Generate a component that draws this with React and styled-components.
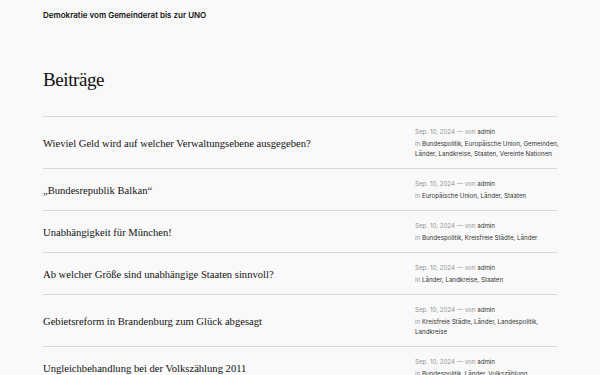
import React from "react";
import styled, { createGlobalStyle } from "styled-components";

const Global = createGlobalStyle`
  html, body { margin: 0; padding: 0; background: #f9f9f9; }
  body { font-family: Inter, "Noto Sans", sans-serif; color: #111; }
`;

const Page = styled.div`
  padding: 0 43px;
  display: flex;
  flex-direction: column;
`;

const Header = styled.header`
  height: 29px;
  display: flex;
  align-items: center;
`;

const SiteTitle = styled.a`
  font-family: Inter, sans-serif;
  font-weight: 600;
  font-size: 8px;
  color: #111;
  text-decoration: none;
`;

const PageTitle = styled.h1`
  margin: 39px 0 24px;
  font-family: "Liberation Serif", serif;
  font-weight: 400;
  font-size: 19px;
  letter-spacing: -0.4px;
  line-height: 24px;
  color: #111;
`;

const List = styled.ul`
  list-style: none;
  margin: 0;
  padding: 0;
`;

const Row = styled.li`
  border-top: 1px solid #d8d8d8;
  display: flex;
  align-items: center;
  padding: 10px 0 9px;
`;

const PostTitle = styled.h2`
  flex: 1;
  margin: 0;
  font-family: "Liberation Serif", serif;
  font-weight: 400;
  font-size: 10.6px;
  color: #111;
`;

const Meta = styled.div`
  width: 145px;
  margin-right: -3px;
  flex: none;
  display: flex;
  flex-direction: column;
  gap: 2px;
  font-size: 6.2px;
  line-height: 10px;
`;

const MetaLine = styled.div`
  color: #949494;
`;

const Strong = styled.span`
  color: #333;
`;

const posts = [
  { t: "Wieviel Geld wird auf welcher Verwaltungsebene ausgegeben?", c: "Bundespolitik, Europäische Union, Gemeinden, Länder, Landkreise, Staaten, Vereinte Nationen" },
  { t: "„Bundesrepublik Balkan“", c: "Europäische Union, Länder, Staaten" },
  { t: "Unabhängigkeit für München!", c: "Bundespolitik, Kreisfreie Städte, Länder" },
  { t: "Ab welcher Größe sind unabhängige Staaten sinnvoll?", c: "Länder, Landkreise, Staaten" },
  { t: "Gebietsreform in Brandenburg zum Glück abgesagt", c: "Kreisfreie Städte, Länder, Landespolitik, Landkreise" },
  { t: "Ungleichbehandlung bei der Volkszählung 2011", c: "Bundespolitik, Länder, Volkszählung" },
];

export default function App() {
  return (
    <>
      <Global />
      <Page>
        <Header>
          <SiteTitle href="#">Demokratie vom Gemeinderat bis zur UNO</SiteTitle>
        </Header>
        <PageTitle>Beiträge</PageTitle>
        <List>
          {posts.map((p, i) => (
            <Row key={i}>
              <PostTitle>{p.t}</PostTitle>
              <Meta>
                <MetaLine>
                  Sep. 10, 2024 — von <Strong>admin</Strong>
                </MetaLine>
                <MetaLine>
                  in <Strong>{p.c}</Strong>
                </MetaLine>
              </Meta>
            </Row>
          ))}
        </List>
      </Page>
    </>
  );
}
